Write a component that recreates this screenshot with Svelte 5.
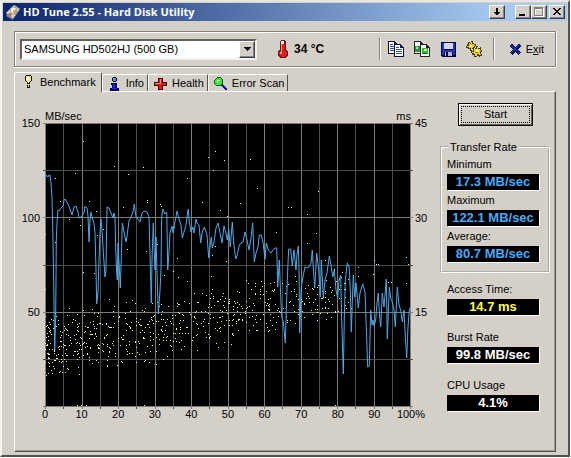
<script lang="ts">
  let drive = $state("SAMSUNG HD502HJ (500 GB)");
  let activeTab = $state("Benchmark");

  const tabs = ["Benchmark", "Info", "Health", "Error Scan"];

  const rates = [
    { id: "min", label: "Minimum", value: "17.3 MB/sec" },
    { id: "max", label: "Maximum", value: "122.1 MB/sec" },
    { id: "avg", label: "Average:", value: "80.7 MB/sec" },
  ];

  const stats = [
    { id: "access", label: "Access Time:", value: "14.7 ms", tone: "yellow" },
    { id: "burst", label: "Burst Rate", value: "99.8 MB/sec", tone: "white" },
    { id: "cpu", label: "CPU Usage", value: "4.1%", tone: "white" },
  ];

  const speedLabels = ["150", "100", "50", ""];
  const accessLabels = ["45", "30", "15", ""];
  const percentLabels = ["0", "10", "20", "30", "40", "50", "60", "70", "80", "90", "100%"];

  // plot area units
  const W = 366;
  const H = 284;

  const cols = Array.from({ length: 21 }, (_, i) => Math.round((i * (W - 1)) / 20) + 0.5);
  const rows = Array.from({ length: 7 }, (_, i) => Math.round((i * (H - 1)) / 6) + 0.5);

  // transfer rate curve
  const curve = `0,56 1,52 3,54 4,52 5,52 6,60 7,75 8,117 9,180 9.7,227 10.7,194 11.3,117 12,100 13,87
    14,88 16,85 18,83 19,77 20,76 23,81 25,86 27,92 29,84 31,83 33,89 34,95 36,94 39,90 40,83 42,85
    43,93 44,119 45,97 46,89 47,94 49,100 50,110 51,147 51.7,181 53,169 54,137 55,110 56,96 57,107
    58,124 60,154 61,147 62,84 64,85 66,90 68,95 69,90 70,94 70.7,124 71.5,147 72.3,157 73,120 74.3,145
    75.3,165 76.3,134 77.3,100 79,109 81,119 82,113 84,98 86,94 88,89 89.3,81 91,94 93,96 95,99 97,90
    99,88 102,89 104,94 104.7,120 106.3,180 107,137 108.3,100 109.3,130 110,147 111,114 112,150
    113.3,191 115,167 116,147 116.7,94 117.7,86 120,91 121.7,89 122.3,120 122.7,147 123.7,134 125,110
    127,103 128,110 129.3,102 131,94 132,88 134,96 136,102 137.3,115 139,109 141,102 142.3,92 143.3,86
    144.3,99 146,109 148,104 149,110 151,96 152,100 154,102 155.7,120 157.3,109 159.3,104 162,112
    163.7,135 165,124 166.3,114 167.3,125 169,119 171,105 173,100 175,110 177,120 179,103 181,110
    182.3,117 183.7,106 185.3,124 187.3,99 188.7,120 190.7,136 192.3,132 194.3,122 196,120 198,119
    200,109 202,117 204,127 206,115 207.7,100 208.7,124 209.3,139 211,130 213,124 214.3,112 216.3,112
    218,119 220,136 221.3,120 223.3,127 226,130 228,127 230,125 231.7,125 232.3,147 232.7,164 234.3,137
    235.3,164 236.7,194 238.3,199 240.3,220 241.3,187 242.7,147 243.7,126 245.7,126 247.3,143 249,127
    251,147 252,131 253.3,123 254,144 254.7,210 255.7,177 256.3,164 258.3,152 260,144 262,145 264,144
    266,140 267.3,127 268.3,145 269.7,165 271.7,130 273.7,147 275.3,174 276.3,137 278.3,174 280,157
    282,150 284.3,133 286,142 287.7,154 289.3,147 291,167 292.7,175 294,157 295.7,152 296.7,197
    298.3,251 299.3,197 300.3,157 302.3,140 304.3,145 305.3,167 306.3,209 307.3,180 308.3,152 309.7,174
    311,160 313.3,185 315,170 317.7,161 320,169 321.3,204 322.7,244 324.3,243 325.7,187 327,202 328,197
    329,203 330.7,197 332,180 333.3,170 334.3,190 335.7,204 337.3,170 339,184 341.3,156 342.3,216
    344.3,164 345.7,175 347.3,179 349,187 350.3,204 352.3,164 354,182 355.7,187 357.3,199 359,187
    360.3,214 361.7,235 363,204 364.3,187 365.5,184`;

  // slow seeks, outside of the dense band
  const strays = [
    [38, 18], [69, 43], [83, 51], [98, 44], [30, 50], [10, 55], [15, 78], [44, 78], [51, 88], [78, 84],
    [24, 96], [35, 102], [52, 112], [58, 106], [0, 111], [10, 119], [82, 126], [101, 128], [102, 77],
    [170, 28], [163, 34], [179, 37], [205, 36], [168, 47], [142, 55], [212, 65], [157, 79], [195, 80],
    [243, 84], [246, 84], [102, 79], [115, 81], [116, 83], [175, 87], [182, 93], [231, 109], [132, 135],
    [167, 132], [181, 138], [170, 123], [129, 104], [112, 121], [273, 68], [262, 91], [271, 110],
    [262, 120], [280, 137], [289, 146], [313, 144], [329, 137], [331, 141], [333, 141], [361, 134],
    [363, 141], [328, 151], [343, 159], [346, 159], [361, 160], [313, 153], [32, 282], [36, 282],
    [41, 282], [99, 282], [38, 149], [49, 150], [0, 166], [64, 176], [128, 148], [133, 154], [142, 158],
    [166, 153], [119, 152], [201, 157], [111, 241], [306, 185], [299, 160], [290, 282],
  ];

  function accessDots(): number[][] {
    const dots: number[][] = [];
    let seed = 255;
    const next = () => {
      seed = (seed * 1103515245 + 12345) % 2147483648;
      return seed / 2147483648;
    };
    for (let i = 0; i < 680; i++) {
      const x = Math.floor(Math.pow(next(), 1.25) * 304);
      const spread = 31 - x * 0.02;
      const y = Math.round(224 - x * 0.175 + (next() + next() * 0.6 - 0.8) * spread * 1.5);
      dots.push([x, y]);
    }
    return dots;
  }

  const dots = [...strays, ...accessDots()];
</script>

{#snippet tabIcon(name: string)}
  <svg class="tab-icon" viewBox="0 0 16 16" aria-hidden="true">
    {#if name === "Benchmark"}
      <path d="M6 1h4l2 2v4l-2 2v2H6V9L4 7V3z" fill="#000" />
      <path d="M6 2h4l1 1v4L9 9v1H7V9L5 7V3z" fill="#f4ec6a" />
      <path d="M6 3h2v3H6z" fill="#fff" />
      <path d="M6 12h4v2l-1 1H7l-1-1z" fill="#000" />
      <path d="M7 12h2v2H7z" fill="#e8d820" />
    {:else if name === "Info"}
      <path d="M6 1h4v1h1v3h-1v1H6V5H5V2h1z" fill="#000" />
      <path d="M6 2h4v3H6z" fill="#38a8e8" />
      <path d="M4 7h7v6h2v3H3v-3h2v-3H4z" fill="#000060" />
      <path d="M5 8h4v5h2v1H5v-1h1V9H5z" fill="#1030e0" />
    {:else if name === "Health"}
      <path d="M5 2h6v4h4v5h-4v4H5v-4H1V6h4z" fill="#400" />
      <path d="M6 3h4v4h4v3h-4v4H6v-4H2V7h4z" fill="#e81818" />
      <path d="M7 3h1v5H2V7h5z" fill="#ff9090" />
    {:else}
      <path d="M9 8l6 5v2h-2L8 10z" fill="#101080" />
      <circle cx="6" cy="6" r="4.5" fill="#38e838" stroke="#075a18" />
      <path d="M4 4h3v1H5v2H4z" fill="#d0ffd0" />
    {/if}
  </svg>
{/snippet}

<div class="window">
  <header class="titlebar">
    <svg class="app-icon" viewBox="0 0 16 16" aria-hidden="true">
      <path d="M1 9L9 1l6 4-7 10z" fill="#d8d8d8" stroke="#777" />
      <path d="M2 10l6 4v2l-7-4z" fill="#8a8a8a" />
      <circle cx="8.5" cy="6.5" r="3.5" fill="#f2eee0" stroke="#999" />
      <path d="M8 7l3-2 1 2-3 4z" fill="#c8a050" />
      <path d="M4 9l3 1-1 2-3-1z" fill="#b86838" />
    </svg>
    <h1>HD Tune 2.55 - Hard Disk Utility</h1>
    <button class="caption tray" aria-label="Minimize to tray">
      <svg viewBox="0 0 12 10"><path d="M5 1h2v4h2v1H8v1H7v1H5V7H4V6H3V5h2z" /></svg>
    </button>
    <button class="caption" aria-label="Minimize">
      <svg viewBox="0 0 12 10"><path d="M2 7h6v2H2z" /></svg>
    </button>
    <button class="caption off" aria-label="Maximize" disabled>
      <svg viewBox="0 0 12 10">
        <path d="M2 1h9v9H2zM3 3v6h7V3z" fill="#fff" fill-rule="evenodd" />
        <path d="M1 0h9v9H1zM2 2v6h7V2z" fill="#808080" fill-rule="evenodd" />
      </svg>
    </button>
    <button class="caption close" aria-label="Close">
      <svg viewBox="0 0 12 10">
        <path d="M2 1h2v1h1v1h2V2h1V1h2v1H9v1H8v1H7v1h1v1h1v1h1v1H8V7H7V6H5v1H4v1H2V7h1V6h1V5h1V4H4V3H3V2H2z" />
      </svg>
    </button>
  </header>

  <div class="toolbar">
    <div class="combo">
      <select bind:value={drive} aria-label="Drive">
        <option>SAMSUNG HD502HJ (500 GB)</option>
      </select>
      <span class="combo-arrow"><svg viewBox="0 0 7 4"><path d="M0 0h7v1H6v1H5v1H4v1H3V3H2V2H1V1H0z" /></svg></span>
    </div>
    <svg class="thermo" viewBox="0 0 10 20" aria-hidden="true">
      <path d="M3 1h4v1h1v9h1v1h1v5H9v1H8v1H2v-1H1v-1H0v-5h1v-1h1V2h1z" fill="#701010" />
      <path d="M3 2h3v3H3z" fill="#fff" />
      <path d="M3 5h4v7h1v1h1v3H8v1H7v1H3v-1H2v-1H1v-3h1v-1h1z" fill="#e01c14" />
      <path d="M3 5h1v8H3zM2 13h2v2H2z" fill="#ff9c8c" />
    </svg>
    <span class="temp">34 °C</span>

    <span class="sep push"></span>
    <button class="tool" aria-label="Copy text to clipboard">
      <svg viewBox="0 0 16 16">
        <path d="M0 0h6l3 3v10H0z" fill="#101050" />
        <path d="M1 1h5v3h2v8H1z" fill="#fff" />
        <path d="M2 3h3v1H2zM2 5h5v1H2zM2 7h5v1H2zM2 9h5v1H2z" fill="#3048b0" />
        <path d="M6 3h6l4 3v10H6z" fill="#101050" />
        <path d="M7 4h5v3h3v8H7z" fill="#fff" />
        <path d="M8 6h3v1H8zM8 8h6v1H8zM8 10h6v1H8zM8 12h6v1H8z" fill="#3048b0" />
      </svg>
    </button>
    <button class="tool" aria-label="Copy screenshot to clipboard">
      <svg viewBox="0 0 16 16">
        <path d="M0 0h6l3 3v10H0z" fill="#202020" />
        <path d="M1 1h5v3h2v8H1z" fill="#fff" />
        <path d="M1 5h5v6H1z" fill="#28a028" />
        <path d="M2 6h2v2H2z" fill="#a0e0f0" />
        <path d="M6 3h6l4 3v10H6z" fill="#202020" />
        <path d="M7 4h5v3h3v8H7z" fill="#fff" />
        <path d="M8 7h6v6H8z" fill="#38b830" />
        <path d="M10 8h3v2h-3z" fill="#c8f0a0" />
        <path d="M8 12h6v1H8z" fill="#107020" />
      </svg>
    </button>
    <button class="tool" aria-label="Save screenshot">
      <svg viewBox="0 0 16 16">
        <path d="M1 1h15v15H2l-1-1z" fill="#000040" />
        <path d="M2 2h2v12H2zM13 2h2v12h-2zM2 9h13v2H2z" fill="#2038b8" />
        <path d="M4 2h9v6H4z" fill="#d4d4ec" />
        <path d="M5 11h7v4H5z" fill="#b8b8c8" />
        <path d="M6 11h2v4H6z" fill="#000040" />
      </svg>
    </button>
    <button class="tool" aria-label="Options">
      <svg viewBox="0 0 16 16">
        <path d="M2 1h2v1h1V0h2v2h1v1h2v2H9v2h1v2H8V8H6v2H4V8H2V7H0V5h1V3h1z" fill="#4a3c00" />
        <path d="M3 2h1v1h1V1h1v2h2v1h1v1H8v2h1v1H8V7H6v2H5V7H3V6H1V5h2z" fill="#ecc828" />
        <path d="M4 4h2v2H4z" fill="#fff4a0" />
        <path d="M7 6h2v1h1V5h2v2h2V6h1v3h1v2h-1v2h1v2h-2v1h-1v-1h-2v1H8v-2H6v-2H5v-2h2V8z" fill="#4a3c00" />
        <path d="M8 7h1v1h2V6h1v2h2v1h1v1h-1v3h1v1h-2v-1h-2v2H9v-2H8v-1H6v-1h2z" fill="#f4d430" />
        <path d="M10 9h2v2h-2z" fill="#fff8b8" />
        <path d="M9 11h3v1H9z" fill="#806808" />
      </svg>
    </button>
    <span class="sep"></span>
    <button class="exit">
      <svg viewBox="0 0 13 13" aria-hidden="true">
        <path d="M2 2l9 9M11 2l-9 9" fill="none" stroke="#08146c" stroke-width="4" />
        <path d="M2 2l8 8M10 2l-8 8" fill="none" stroke="#2040b8" />
      </svg>
      <span>E<u>x</u>it</span>
    </button>
  </div>

  <nav class="tabs">
    {#each tabs as tab}
      <button class="tab" class:active={tab === activeTab} onclick={() => (activeTab = tab)}>
        {@render tabIcon(tab)}
        {tab}
      </button>
    {/each}
  </nav>

  <main class="panel">
    <section class="chart">
      <div class="units"><span>MB/sec</span><span>ms</span></div>
      <div class="axis left">
        {#each speedLabels as label}<span>{label}</span>{/each}
      </div>
      <svg class="plot" viewBox="0 0 {W} {H}" preserveAspectRatio="none">
        <rect width={W} height={H} fill="#000" />
        {#each cols as x, i}
          <line x1={x} x2={x} y1="0" y2={H + 2} class:major={i % 2 === 0} />
        {/each}
        {#each rows as y, i}
          <line x1="-2" x2={W + 2} y1={y} y2={y} class:major={i % 2 === 0} />
        {/each}
        {#each dots as [x, y]}
          <rect {x} {y} width="1" height="1" fill="#f4f4a0" />
        {/each}
        <polyline points={curve} />
      </svg>
      <div class="axis right">
        {#each accessLabels as label}<span>{label}</span>{/each}
      </div>
      <div class="percent">
        {#each percentLabels as label}<span>{label}</span>{/each}
      </div>
    </section>

    <aside class="side">
      <button class="start"><span>Start</span></button>
      <fieldset>
        <legend>Transfer Rate</legend>
        {#each rates as rate}
          <div class="reading">
            <label for={rate.id}>{rate.label}</label>
            <output id={rate.id} class="blue">{rate.value}</output>
          </div>
        {/each}
      </fieldset>
      <div class="stats">
        {#each stats as stat}
          <div class="reading">
            <label for={stat.id}>{stat.label}</label>
            <output id={stat.id} class={stat.tone}>{stat.value}</output>
          </div>
        {/each}
      </div>
    </aside>
  </main>
</div>

<style>
  :global(body) {
    background: #fff;
  }

  .window {
    box-sizing: border-box;
    margin-right: 1px;
    padding: 1px 0 3px;
    border: 2px solid;
    border-color: #e8e6e0 #505050 #505050 #f4f2ee;
    background: #d4d0c8;
    color: #000;
    font: 11px/14px "Liberation Sans", Arial, sans-serif;
  }

  button,
  select {
    font: inherit;
    color: inherit;
    padding: 0;
    border: 0;
    background: none;
    border-radius: 0;
  }

  svg {
    display: block;
    flex: none;
    shape-rendering: crispEdges;
  }

  .titlebar {
    display: flex;
    align-items: center;
    height: 18px;
    margin: 0 1px;
    padding: 0 2px;
    background: linear-gradient(to right, #0a246a, #a6caf0 88%);
  }

  .app-icon {
    width: 16px;
    height: 16px;
    shape-rendering: auto;
  }

  h1 {
    flex: 1;
    margin: 0 0 0 2px;
    color: #fff;
    font: bold 11px/16px "Open Sans", Tahoma, sans-serif;
    white-space: nowrap;
  }

  .caption {
    box-sizing: border-box;
    width: 16px;
    height: 14px;
    border: 1px solid;
    border-color: #fff #404040 #404040 #fff;
    box-shadow: inset -1px -1px #808080;
    background: #d4d0c8;
  }

  .caption svg {
    width: 12px;
    height: 10px;
    margin-left: 1px;
  }

  .tray {
    margin-right: 10px;
  }

  .close {
    margin-left: 2px;
  }

  .toolbar {
    display: flex;
    align-items: center;
    box-sizing: border-box;
    height: 36px;
    margin: 10px 12px 5px;
    padding: 0 11px 0 5px;
    border: 1px solid #808080;
    box-shadow: inset 1px 1px #fff, inset -1px -1px #d4d0c8, 0 1px #fff, 1px 0 #fff;
  }

  .combo {
    display: grid;
    box-sizing: border-box;
    width: 237px;
    height: 21px;
    border: 2px solid;
    border-color: #606060 #f4f2ee #f4f2ee #606060;
    background: #fff;
  }

  .combo select,
  .combo-arrow {
    grid-area: 1 / 1;
  }

  .combo select {
    appearance: none;
    padding: 0 20px 0 2px;
    outline: 0;
  }

  .combo-arrow {
    display: grid;
    place-items: center;
    justify-self: end;
    box-sizing: border-box;
    width: 16px;
    border: 1px solid;
    border-color: #fff #404040 #404040 #fff;
    box-shadow: inset -1px -1px #808080;
    background: #d4d0c8;
    pointer-events: none;
  }

  .combo-arrow svg {
    width: 7px;
    height: 4px;
  }

  .thermo {
    width: 10px;
    height: 20px;
    margin: 0 6px 0 21px;
  }

  .temp {
    font-size: 12px;
    font-weight: bold;
  }

  .sep {
    width: 1px;
    height: 22px;
    margin-right: 2px;
    border-right: 1px solid #fff;
    background: #808080;
  }

  .push {
    margin-left: auto;
  }

  .tool {
    width: 26px;
    height: 24px;
  }

  .tool svg {
    width: 16px;
    height: 16px;
    margin: 0 auto;
  }

  .tool + .sep {
    margin-left: 6px;
  }

  .exit {
    display: flex;
    align-items: center;
    gap: 4px;
    padding-left: 12px;
  }

  .exit svg {
    width: 13px;
    height: 13px;
  }

  .tabs {
    display: flex;
    align-items: flex-end;
    margin: 0 12px;
    height: 19px;
  }

  .tab {
    display: flex;
    align-items: center;
    gap: 4px;
    box-sizing: border-box;
    height: 17px;
    padding: 0 3px 0 4px;
    border: 1px solid;
    border-color: #fff #505050 transparent #fff;
    border-bottom: 0;
    border-radius: 2px 2px 0 0;
    white-space: nowrap;
  }

  .tab.active {
    height: 20px;
    margin-bottom: -1px;
    padding: 0 5px 2px 6px;
    background: #d4d0c8;
    z-index: 1;
  }

  .tab-icon {
    width: 15px;
    height: 15px;
  }

  .panel {
    display: grid;
    grid-template-columns: 1fr 110px;
    box-sizing: border-box;
    margin: 0 12px;
    padding: 11px 5px 30px 0;
    border: 1px solid;
    border-color: #fff #505050 #505050 #fff;
    box-shadow: inset -1px -1px #a09c94;
  }

  .chart {
    display: grid;
    grid-template-columns: 30px 1fr 29px;
    grid-template-rows: 20px 284px 14px;
    align-content: start;
  }

  .units {
    grid-column: 2;
    display: flex;
    justify-content: space-between;
    align-items: flex-end;
  }

  .axis {
    grid-row: 2;
    display: flex;
    flex-direction: column;
    justify-content: space-between;
    margin: -7px 0;
  }

  .axis span {
    height: 14px;
  }

  .left {
    grid-column: 1;
    padding-right: 5px;
    text-align: right;
  }

  .right {
    grid-column: 3;
    padding-left: 4px;
  }

  .plot {
    grid-area: 2 / 2;
    width: 100%;
    height: 284px;
    overflow: visible;
  }

  .plot line {
    stroke: #4c4c4c;
    vector-effect: non-scaling-stroke;
  }

  .plot line.major {
    stroke: #7c7c78;
  }

  .plot polyline {
    fill: none;
    stroke: #50a8e4;
    vector-effect: non-scaling-stroke;
    shape-rendering: auto;
  }

  .percent {
    grid-area: 3 / 2;
    display: flex;
    justify-content: space-between;
  }

  .percent span {
    display: flex;
    justify-content: center;
    width: 0;
  }

  .start {
    display: block;
    box-sizing: border-box;
    width: 75px;
    height: 23px;
    margin: 0 auto 13px 18px;
    padding: 2px;
    border: 1px solid #000;
    box-shadow: inset 1px 1px #fff, inset -1px -1px #606060;
  }

  .start span {
    display: block;
    border: 1px dotted #000;
    line-height: 15px;
  }

  fieldset {
    min-width: 0;
    margin: 0;
    padding: 1px 9px 9px 5px;
    border: 2px groove #fff;
  }

  legend {
    margin-left: 1px;
    padding: 0 2px;
    line-height: 16px;
  }

  .reading {
    display: flex;
    flex-direction: column;
    gap: 2px;
    margin-bottom: 2px;
  }

  .reading:last-child {
    margin-bottom: 0;
  }

  .reading label {
    line-height: 16px;
  }

  output {
    height: 16px;
    background: #000;
    box-shadow: 1px 1px #fff;
    font-size: 13px;
    font-weight: bold;
    line-height: 16px;
    text-align: center;
    white-space: nowrap;
  }

  .stats {
    display: flex;
    flex-direction: column;
    gap: 14px;
    padding: 8px 11px 0 7px;
  }

  .stats .reading {
    margin-bottom: 0;
  }

  .blue {
    color: #48a8f4;
  }

  .yellow {
    color: #ffff50;
  }

  .white {
    color: #fff;
  }
</style>
